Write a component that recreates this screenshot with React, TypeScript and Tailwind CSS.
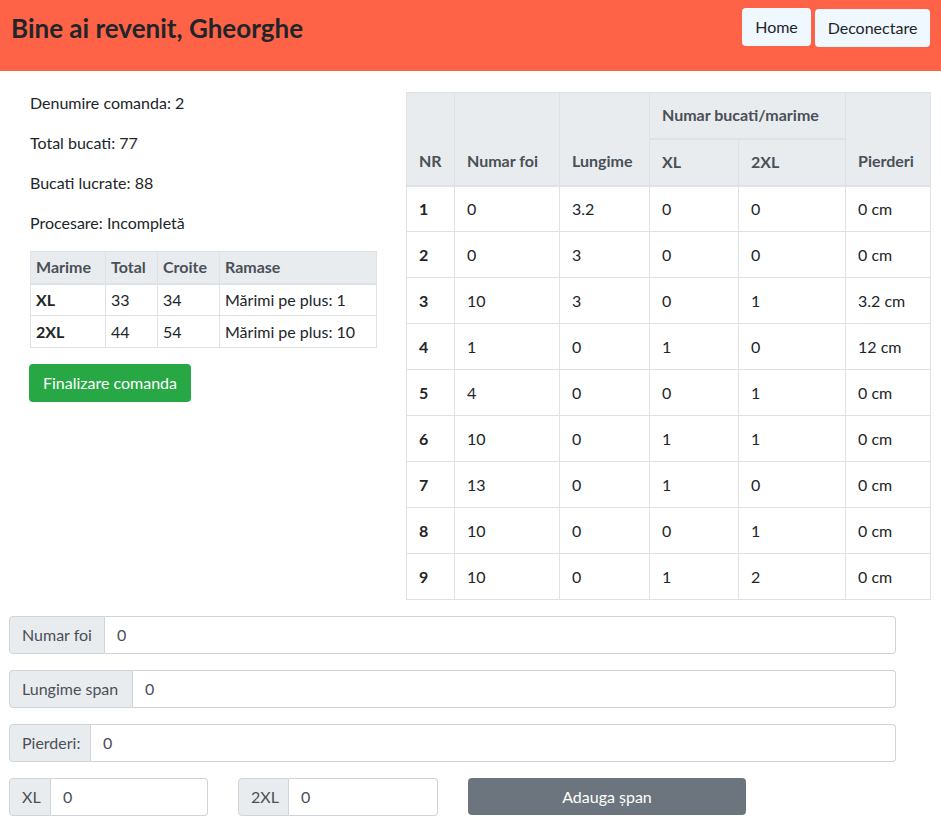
import React from "react";

const sizes = [
  { marime: "XL", total: 33, croite: 34, ramase: "Mărimi pe plus: 1" },
  { marime: "2XL", total: 44, croite: 54, ramase: "Mărimi pe plus: 10" },
];

const spans = [
  { nr: 1, foi: 0, lung: "3.2", xl: 0, xxl: 0, pierderi: "0 cm" },
  { nr: 2, foi: 0, lung: "3", xl: 0, xxl: 0, pierderi: "0 cm" },
  { nr: 3, foi: 10, lung: "3", xl: 0, xxl: 1, pierderi: "3.2 cm" },
  { nr: 4, foi: 1, lung: "0", xl: 1, xxl: 0, pierderi: "12 cm" },
  { nr: 5, foi: 4, lung: "0", xl: 0, xxl: 1, pierderi: "0 cm" },
  { nr: 6, foi: 10, lung: "0", xl: 1, xxl: 1, pierderi: "0 cm" },
  { nr: 7, foi: 13, lung: "0", xl: 1, xxl: 0, pierderi: "0 cm" },
  { nr: 8, foi: 10, lung: "0", xl: 0, xxl: 1, pierderi: "0 cm" },
  { nr: 9, foi: 10, lung: "0", xl: 1, xxl: 2, pierderi: "0 cm" },
];

function InputGroup({ label, labelW, className }: { label: string; labelW: string; className?: string }) {
  return (
    <div className={"flex h-[38px] " + (className ?? "")}>
      <span className={"flex items-center px-3 bg-[#e9ecef] border border-[#ced4da] rounded-l text-[#495057] whitespace-nowrap " + labelW}>
        {label}
      </span>
      <input
        defaultValue="0"
        className="flex-1 min-w-0 px-3 border border-l-0 border-[#ced4da] rounded-r text-[#495057] outline-none bg-white"
      />
    </div>
  );
}

export default function App() {
  return (
    <div className="min-h-screen bg-white text-[#212529] text-base leading-6 font-['Lato','Liberation_Sans',sans-serif]">
      <header className="h-[71px] bg-[#ff6347] flex justify-between items-start pl-[11px] pr-[11px]">
        <h1 className="mt-[13px] text-[26px] leading-[31px] font-bold">Bine ai revenit, Gheorghe</h1>
        <div className="flex items-start gap-[4px] pt-[8px]">
          <button className="h-[38px] w-[69px] bg-[#f0f8ff] rounded text-[#212529]">Home</button>
          <button className="h-[38px] w-[115px] bg-[#f0f8ff] rounded text-[#212529] mt-px">Deconectare</button>
        </div>
      </header>

      <main className="flex pt-[20px] pl-[30px] gap-[30px]">
        <div className="w-[346px] flex flex-col">
          <p className="mb-4">Denumire comanda: 2</p>
          <p className="mb-4">Total bucati: 77</p>
          <p className="mb-4">Bucati lucrate: 88</p>
          <p className="mb-4">Procesare: Incompletă</p>
          <table className="w-[346px] table-fixed border-collapse">
            <colgroup>
              <col className="w-[75px]" />
              <col className="w-[52px]" />
              <col className="w-[62px]" />
              <col className="w-[157px]" />
            </colgroup>
            <thead>
              <tr className="h-[32px] bg-[#e9ecef] text-[#495057]">
                {["Marime", "Total", "Croite", "Ramase"].map((h) => (
                  <th key={h} className="border border-[#dee2e6] border-b-2 px-[5px] text-left font-bold">
                    {h}
                  </th>
                ))}
              </tr>
            </thead>
            <tbody>
              {sizes.map((s) => (
                <tr key={s.marime} className="h-[32px]">
                  <td className="border border-[#dee2e6] px-[5px] font-bold">{s.marime}</td>
                  <td className="border border-[#dee2e6] px-[5px]">{s.total}</td>
                  <td className="border border-[#dee2e6] px-[5px]">{s.croite}</td>
                  <td className="border border-[#dee2e6] px-[5px]">{s.ramase}</td>
                </tr>
              ))}
            </tbody>
          </table>
          <div className="mt-4">
            <button className="h-[38px] w-[162px] bg-[#28a745] text-white rounded -ml-px">Finalizare comanda</button>
          </div>
        </div>

        <table className="w-[524px] table-fixed border-collapse mt-px self-start">
          <colgroup>
            <col className="w-[48px]" />
            <col className="w-[105px]" />
            <col className="w-[90px]" />
            <col className="w-[89px]" />
            <col className="w-[107px]" />
            <col className="w-[85px]" />
          </colgroup>
          <thead className="bg-[#e9ecef] text-[#495057]">
            <tr className="h-[46px]">
              <th rowSpan={2} className="border border-[#dee2e6] border-b-2 px-3 py-3 text-left align-bottom font-bold">NR</th>
              <th rowSpan={2} className="border border-[#dee2e6] border-b-2 px-3 py-3 text-left align-bottom font-bold">Numar foi</th>
              <th rowSpan={2} className="border border-[#dee2e6] border-b-2 px-3 py-3 text-left align-bottom font-bold">Lungime</th>
              <th colSpan={2} className="border border-[#dee2e6] border-b-2 px-3 text-left align-middle font-bold">Numar bucati/marime</th>
              <th rowSpan={2} className="border border-[#dee2e6] border-b-2 px-3 py-3 text-left align-bottom font-bold">Pierderi</th>
            </tr>
            <tr className="h-[47px]">
              <th className="border border-[#dee2e6] border-b-2 px-3 text-left font-bold">XL</th>
              <th className="border border-[#dee2e6] border-b-2 px-3 text-left font-bold">2XL</th>
            </tr>
          </thead>
          <tbody>
            {spans.map((r) => (
              <tr key={r.nr} className="h-[46px]">
                <td className="border border-[#dee2e6] px-3 font-bold">{r.nr}</td>
                <td className="border border-[#dee2e6] px-3">{r.foi}</td>
                <td className="border border-[#dee2e6] px-3">{r.lung}</td>
                <td className="border border-[#dee2e6] px-3">{r.xl}</td>
                <td className="border border-[#dee2e6] px-3">{r.xxl}</td>
                <td className="border border-[#dee2e6] px-3">{r.pierderi}</td>
              </tr>
            ))}
          </tbody>
        </table>
      </main>

      <section className="pl-[9px] pt-[16px] w-[896px] flex flex-col gap-4">
        <InputGroup label="Numar foi" labelW="w-[96px]" />
        <InputGroup label="Lungime span" labelW="w-[124px]" />
        <InputGroup label="Pierderi:" labelW="w-[82px]" />
        <div className="flex gap-[30px]">
          <InputGroup label="XL" labelW="w-[42px]" className="w-[199px]" />
          <InputGroup label="2XL" labelW="w-[51px]" className="w-[200px]" />
          <button className="h-[37px] w-[278px] bg-[#6c757d] text-white rounded">Adauga șpan</button>
        </div>
      </section>
    </div>
  );
}
